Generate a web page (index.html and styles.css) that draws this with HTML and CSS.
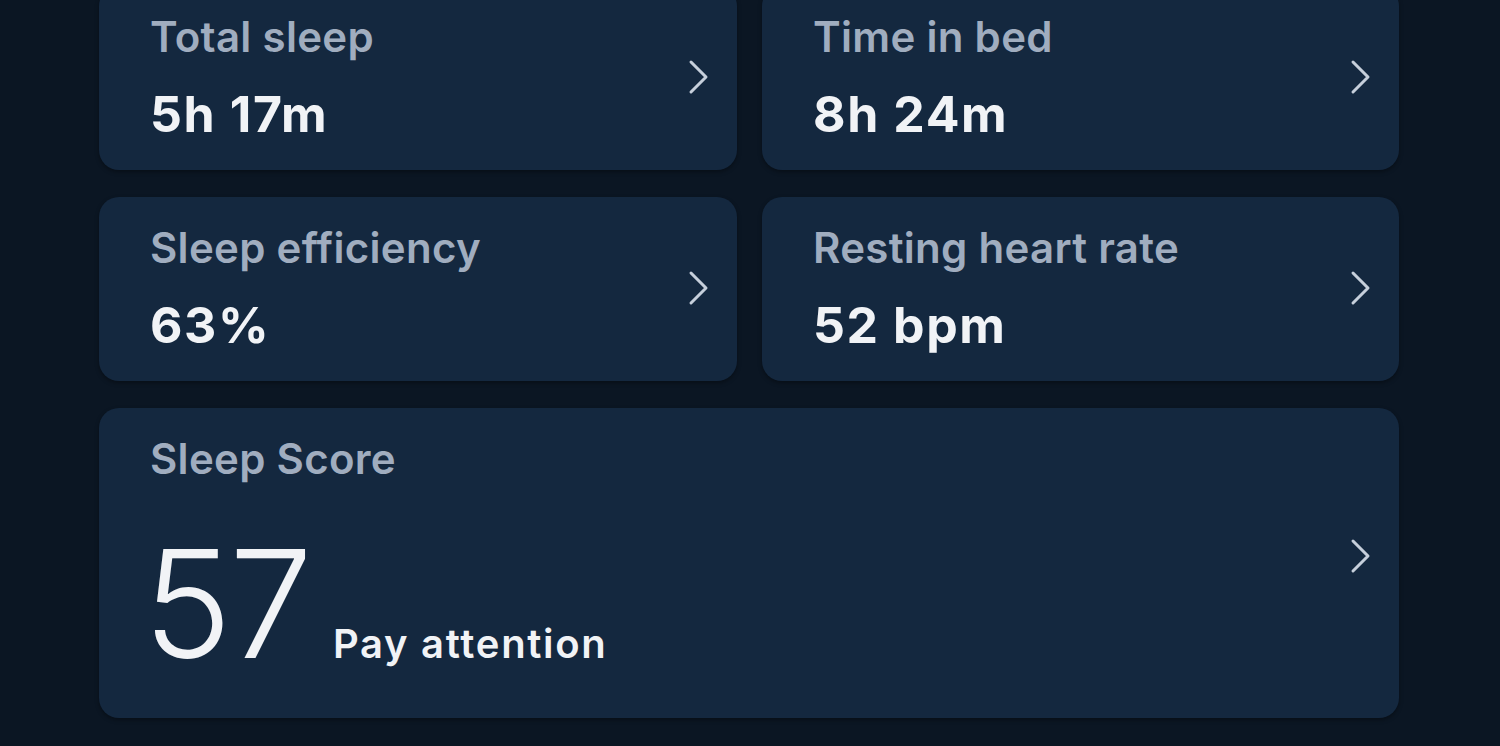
FILE: index.html
```html
<!DOCTYPE html>
<html lang="en">
<head>
<meta charset="utf-8">
<title>Sleep summary</title>
<link rel="stylesheet" href="styles.css">
</head>
<body>
<main class="grid">
  <a class="card">
    <div class="content">
      <div class="label">Total sleep</div>
      <div class="value">5h 17m</div>
    </div>
    <svg class="chev" viewBox="0 0 22 36" aria-hidden="true"><path d="M3 3 L18 18 L3 33"/></svg>
  </a>
  <a class="card">
    <div class="content">
      <div class="label">Time in bed</div>
      <div class="value">8h 24m</div>
    </div>
    <svg class="chev" viewBox="0 0 22 36" aria-hidden="true"><path d="M3 3 L18 18 L3 33"/></svg>
  </a>
  <a class="card">
    <div class="content">
      <div class="label">Sleep efficiency</div>
      <div class="value">63%</div>
    </div>
    <svg class="chev" viewBox="0 0 22 36" aria-hidden="true"><path d="M3 3 L18 18 L3 33"/></svg>
  </a>
  <a class="card">
    <div class="content">
      <div class="label">Resting heart rate</div>
      <div class="value">52 bpm</div>
    </div>
    <svg class="chev" viewBox="0 0 22 36" aria-hidden="true"><path d="M3 3 L18 18 L3 33"/></svg>
  </a>
  <a class="card wide">
    <div class="content">
      <div class="label">Sleep Score</div>
      <div class="score-row">
        <span class="score">57</span>
        <span class="status">Pay attention</span>
      </div>
    </div>
    <svg class="chev" viewBox="0 0 22 36" aria-hidden="true"><path d="M3 3 L18 18 L3 33"/></svg>
  </a>
</main>
</body>
</html>
```

FILE: styles.css
```css
html, body {
  margin: 0;
  padding: 0;
  background: #0b1623;
  height: 100%;
  overflow: hidden;
}

body {
  font-family: "Inter", "Noto Sans", sans-serif;
  color: #eef1f5;
}

.grid {
  display: grid;
  grid-template-columns: 638px 637px;
  column-gap: 25px;
  row-gap: 27px;
  margin: -14px 0 0 99px;
}

.card {
  display: flex;
  align-items: center;
  justify-content: space-between;
  background: #14283f;
  border-radius: 20px;
  padding: 26px 27px 28px 51px;
  box-shadow: 0 2px 4px rgba(0, 0, 0, 0.35);
}

.card.wide {
  grid-column: 1 / 3;
  padding-bottom: 40px;
}

.content {
  display: flex;
  flex-direction: column;
}

.label {
  font-size: 42px;
  line-height: 50px;
  font-weight: 600;
  color: #a0adbf;
  letter-spacing: 0.3px;
}

.value {
  margin-top: 24px;
  font-size: 50px;
  line-height: 56px;
  font-weight: 700;
  color: #f1f3f6;
  letter-spacing: 1.6px;
}

.score-row {
  display: flex;
  align-items: baseline;
  margin-top: 46px;
}

.score {
  margin-left: -7px;
  font-size: 150px;
  line-height: 148px;
  font-weight: 300;
  letter-spacing: -3px;
  color: #f1f3f6;
}

.status {
  margin-left: 23px;
  font-size: 40px;
  font-weight: 600;
  letter-spacing: 1.7px;
  color: #f1f3f6;
}

.chev {
  width: 22px;
  height: 36px;
  flex: none;
}

.chev path {
  fill: none;
  stroke: #c6cfdb;
  stroke-width: 3;
  stroke-linecap: round;
  stroke-linejoin: round;
}
```
